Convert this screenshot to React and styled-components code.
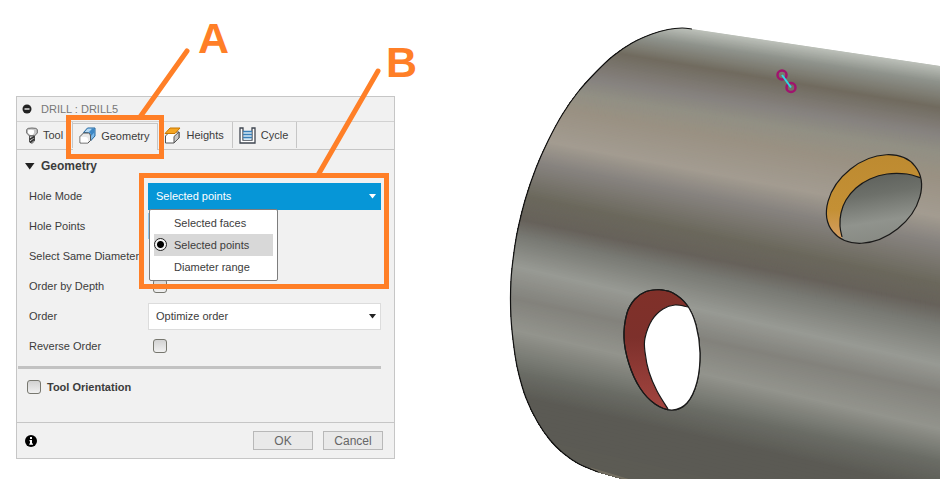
import React from "react";
import styled, { createGlobalStyle } from "styled-components";

const GlobalStyle = createGlobalStyle`
  * {
    box-sizing: border-box;
  }

  body {
    margin: 0;
    background: #ffffff;
    color: #3c3c3c;
    font-family: "Liberation Sans", Arial, sans-serif;
    font-size: 11px;
  }

  button, input, select {
    font: inherit;
    color: inherit;
  }
`;

const orange = "#ff7f27";

const Page = styled.main`
  display: grid;
  grid-template-columns: minmax(0, 25fr) minmax(0, 22fr);
  align-items: start;
`;

const Side = styled.div`
  padding: 96px 105px 20px 16px;
`;

const Panel = styled.form`
  background: #f1f1f1;
  border: 1px solid #c6c6c6;
`;

const Header = styled.header`
  display: flex;
  align-items: center;
  gap: 9px;
  height: 25px;
  padding-left: 5px;
  border-bottom: 1px solid #d2d2d2;
  color: #777777;
`;

const Collapse = styled.button`
  display: flex;
  padding: 0;
  border: 0;
  background: none;
`;

const Title = styled.h1`
  margin: 0;
  font-size: 11px;
  font-weight: normal;
`;

const Tabs = styled.nav`
  display: flex;
  height: 28px;
  border-bottom: 1px solid #c6c6c6;
`;

const Tab = styled.button`
  position: relative;
  display: flex;
  align-items: center;
  gap: 5px;
  height: ${(props) => (props.$active ? 27 : 26)}px;
  margin-top: ${(props) => (props.$active ? 1 : 0)}px;
  padding: 0 8px 0 6px;
  padding-bottom: ${(props) => (props.$active ? 3 : 0)}px;
  border: 0 solid #c6c6c6;
  border-right-width: 1px;
  border-top-width: ${(props) => (props.$active ? 1 : 0)}px;
  background: #f1f1f1;
  white-space: nowrap;

  &:first-child {
    padding: 0 9px;
  }
`;

const Body = styled.div`
  padding: 1px 13px 0 12px;
`;

const SectionTitle = styled.h2`
  display: flex;
  align-items: center;
  gap: 6px;
  height: 30px;
  margin: 0 0 0 -12px;
  padding-left: 8px;
  font-size: 12px;
`;

const Row = styled.div`
  position: relative;
  display: grid;
  grid-template-columns: 119px minmax(0, 1fr);
  align-items: center;
  height: 30px;
`;

const Field = styled.div`
  position: relative;
`;

const Select = styled.select`
  display: block;
  width: 100%;
  height: 27px;
  padding: 0 7px;
  appearance: none;
  border: 1px solid ${(props) => (props.$open ? "#0696d7" : "#dcdcdc")};
  border-radius: 0;
  background: ${(props) => (props.$open ? "#0696d7" : "#ffffff")};
  color: ${(props) => (props.$open ? "#ffffff" : "#3c3c3c")};
`;

const Arrow = styled.svg`
  position: absolute;
  right: 5px;
  top: 11px;
  pointer-events: none;
`;

const Picker = styled.button`
  width: 110px;
  height: 26px;
  border: 1px solid #8cc8f0;
  background: #b4dcf5;
`;

const Menu = styled.div`
  position: absolute;
  z-index: 1;
  top: 26px;
  left: 1px;
  width: 129px;
  padding: 2px 4px;
  border: 1px solid #7d7d7d;
  border-radius: 2px;
  background: #ffffff;
`;

const Option = styled.label`
  display: flex;
  align-items: center;
  gap: 7px;
  height: 22px;
  background: ${(props) => (props.$checked ? "#d8d8d8" : "none")};
`;

const Radio = styled.input`
  width: 13px;
  height: 13px;
  margin: 0;
  appearance: none;
  border-radius: 50%;

  &:checked {
    border: 1px solid #222222;
    background: radial-gradient(circle, #000000 0 3px, #f4f4f4 4px);
  }
`;

const Checkbox = styled.input`
  display: block;
  width: 14px;
  height: 14px;
  margin: 0;
  appearance: none;
  border: 1px solid #77776f;
  border-radius: 3px;
  background: linear-gradient(#d2d2d2, #f0f0f0);
`;

const CheckField = styled.div`
  padding-left: 5px;
`;

const Divider = styled.hr`
  height: 3px;
  margin: 5px 0 0 -11px;
  border: 0;
  background: #c2c2c2;
`;

const Orientation = styled.label`
  display: flex;
  align-items: center;
  gap: 6px;
  height: 53px;
  margin-left: -2px;
  padding-bottom: 18px;
  font-weight: bold;
`;

const Footer = styled.footer`
  display: flex;
  align-items: center;
  gap: 10px;
  height: 36px;
  padding: 0 11px 0 8px;
  border-top: 1px solid #c6c6c6;
`;

const InfoButton = styled(Collapse)`
  margin-right: auto;
`;

const Button = styled.button`
  width: 60px;
  height: 19px;
  padding: 0;
  border: 1px solid #b8b8b8;
  background: #e9e9e9;
  color: #666666;
  font-size: 12px;
`;

const Mark = styled.span`
  position: absolute;
  z-index: 2;
  top: ${(props) => props.$top}px;
  left: ${(props) => props.$left}px;
  right: ${(props) => props.$right}px;
  height: ${(props) => props.$height}px;
  border: 5px solid ${orange};
  pointer-events: none;
`;

const Leader = styled.svg`
  position: absolute;
  right: ${(props) => props.$right}px;
  bottom: calc(100% + 3px);
  overflow: visible;
  fill: ${orange};
  stroke: ${orange};
  font-size: 43px;
  font-weight: bold;
`;

const Model = styled.svg`
  display: block;
  width: 100%;
`;

function Callout({ letter, width, height, line, x, y, right, ...box }) {
  return (
    <Mark $top={box.top} $left={box.left} $right={box.end} $height={box.tall}>
      <Leader $right={right} width={width} height={height}>
        <path d={line} strokeWidth="5" strokeLinecap="round" />
        <text x={x} y={y} stroke="none">
          {letter}
        </text>
      </Leader>
    </Mark>
  );
}

function DrillIcon() {
  return (
    <svg width="12" height="17" viewBox="0 0 12 17" strokeLinejoin="round">
      <path d="M.7 2.500Q1 1 6 1t5.300 1.500V6L8.500 9h-5L.7 6z" fill="#c9c9c9" stroke="#666" />
      <path d="M2 3.200q3-1 6 0V6L6.500 8h-2L2 6z" fill="#fff" />
      <path d="M3.500 9h5v5L6 16.300 3.500 15z" fill="#e4e4e4" stroke="#555" />
      <path d="M3.500 12.500l5-3M4 15.500l4.500-3.500" stroke="#333" strokeWidth="1.600" />
    </svg>
  );
}

function GeometryIcon() {
  return (
    <svg width="17" height="17" viewBox="0 0 17 17" strokeLinejoin="round">
      <path d="M4.500 5.500L8.500 1H16v8l-4.500 5V8.500L9.500 6z" fill="#7db9e8" stroke="#23659c" />
      <path d="M8.700 1.700L5.700 5h4l3-3.300z" fill="#b5d9f3" />
      <path d="M10 5.300q2 .7 2 3.700l3.300-3.500V2H13z" fill="#3d87c4" />
      <path d="M1 9.500L4.500 6h5q2 .5 2 3v4.500L9 16H1z" fill="#e8e8e8" stroke="#555" />
      <path d="M1.500 10H7q2 .3 2 2.500v3H1.500z" fill="#fff" />
    </svg>
  );
}

function HeightsIcon() {
  return (
    <svg width="17" height="17" viewBox="0 0 17 17" strokeLinejoin="round">
      <path d="M1.500 9l4-4H15v6l-5 5H1.500z" fill="#fff" stroke="#555" />
      <path d="M10 9.500L15 5v6l-5 5z" fill="#c8c8c8" stroke="#555" />
      <path d="M1 6.500L6 1h10l-5 5.500z" fill="#f5a623" stroke="#c77700" />
    </svg>
  );
}

function CycleIcon() {
  return (
    <svg width="17" height="17" viewBox="0 0 17 17">
      <path d="M1 1h3v12h9V1h3v15H1z" fill="#fff" stroke="#3f4650" strokeWidth="1.300" />
      <path d="M4.500 4h8v9h-8z" fill="#d4e8f6" />
      <path d="M4 4.500h9M4 7.500h9M4 10.500h9" stroke="#397fb8" strokeWidth="1.400" />
    </svg>
  );
}

function DownArrow({ fill }) {
  return (
    <Arrow width="7" height="5" viewBox="0 0 7 5">
      <path d="M0 0h7L3.500 4.500z" fill={fill} />
    </Arrow>
  );
}

function CheckRow({ id, label }) {
  return (
    <Row>
      <label htmlFor={id}>{label}</label>
      <CheckField>
        <Checkbox type="checkbox" id={id} />
      </CheckField>
    </Row>
  );
}

// [y at the left end, y at the right end, colour]
const bands = [
  [0, 65, [190, 194, 187]],
  [15, 82, [142, 146, 139]],
  [33, 107, [113, 107, 95]],
  [64, 133, [134, 130, 127]],
  [81, 152, [146, 144, 132]],
  [98, 177, [154, 145, 131]],
  [132, 216, [163, 156, 145]],
  [156, 243, [134, 130, 126]],
  [190, 283, [107, 104, 92]],
  [215, 305, [103, 98, 91]],
  [232, 325, [121, 122, 116]],
  [262, 364, [152, 154, 148]],
  [295, 391, [131, 130, 124]],
  [326, 428, [147, 148, 141]],
  [367, 460, [107, 109, 102]],
  [392, 490, [91, 90, 84]],
  [470, 570, [92, 91, 84]],
];

const steps = 20;

function Shading() {
  const strips = [];
  bands.slice(0, -1).forEach((from, i) => {
    const to = bands[i + 1];
    for (let n = 0; n < steps; n++) {
      const mix = (a, b) => a + ((b - a) * n) / steps;
      const color = from[2].map((c, k) => Math.round(mix(c, to[2][k])));
      strips.push(
        <path
          key={`${i}-${n}`}
          d={`M500 ${mix(from[0], to[0])}L940 ${mix(from[1], to[1])}V479H500z`}
          fill={`rgb(${color.join(",")})`}
        />
      );
    }
  });
  return strips;
}

// smooth curve through a list of points
function curve(points) {
  let d = `M${points[0]}`;
  for (let i = 0; i < points.length - 1; i++) {
    const a = points[i - 1] || points[i];
    const b = points[i];
    const c = points[i + 1];
    const e = points[i + 2] || c;
    d += `C${b[0] + (c[0] - a[0]) / 6} ${b[1] + (c[1] - a[1]) / 6} `;
    d += `${c[0] - (e[0] - b[0]) / 6} ${c[1] - (e[1] - b[1]) / 6} ${c}`;
  }
  return d;
}

const rim = curve([
  [692, 29], [682, 28], [668, 29.5], [652, 34], [632, 43], [613, 56],
  [596, 72], [578, 92], [562, 115], [548, 141], [536, 168], [526, 197],
  [519, 224], [515, 245], [511, 280], [511, 318], [515, 355], [519, 375],
  [526, 398], [537, 421], [550, 440], [563, 453], [579, 464], [598, 472],
]);

const redHole = curve([
  [659, 289.5], [673, 293], [687, 305], [696, 325], [700, 353], [697, 382],
  [687, 403], [672, 410], [655, 404], [640, 388], [629, 364], [624, 338],
  [627, 313], [635, 299], [646, 291.5], [659, 289.5],
]);

const redEdge = curve([
  [688, 307], [675, 305], [663, 309], [652, 320], [645, 338], [645, 352],
  [649, 372], [657, 391], [668, 409],
]);

const yellowEdge = curve([
  [921, 178], [907, 174], [887, 174], [870, 179], [856, 188], [846, 200],
  [841, 213], [840, 226], [842, 237],
]);

function Cylinder() {
  return (
    <Model viewBox="500 0 440 479" fill="none" role="img" aria-label="Cylinder with drilled holes">
      <defs>
        <clipPath id="body">
          <path d={`${rim}L622 479H940V66z`} />
        </clipPath>
        <clipPath id="red">
          <path d={redHole} />
        </clipPath>
        <clipPath id="yellow">
          <ellipse cx="874" cy="199" rx="52.6" ry="38.1" transform="rotate(-38.5 874 199)" />
        </clipPath>
        <linearGradient id="redFill" x1="0" y1="0" x2="0" y2="1">
          <stop offset="0" stopColor="#803029" />
          <stop offset=".4" stopColor="#7d302b" />
          <stop offset="1" stopColor="#a34540" />
        </linearGradient>
        <linearGradient id="yellowFill" x1="0" y1="0" x2="0" y2="1">
          <stop offset="0" stopColor="#bd8a30" />
          <stop offset=".6" stopColor="#c49035" />
          <stop offset="1" stopColor="#dca476" />
        </linearGradient>
        <linearGradient id="inside" x1=".4" y1="0" x2=".6" y2="1">
          <stop offset="0" stopColor="#5f625d" />
          <stop offset=".25" stopColor="#6d706a" />
          <stop offset=".6" stopColor="#90938d" />
          <stop offset="1" stopColor="#83857e" />
        </linearGradient>
      </defs>
      <g clipPath="url(#body)">
        <Shading />
        <path d="M590 470l40 12" stroke="#8a816e" strokeWidth="5" opacity=".5" />
      </g>
      <path d={rim} stroke="#111" strokeWidth="1.200" />
      <g stroke="#191919" strokeWidth="1.200">
        <g clipPath="url(#yellow)">
          <path d="M820 150h110v100H820z" fill="url(#yellowFill)" stroke="none" />
          <path d={`${yellowEdge}V250H940z`} fill="url(#inside)" stroke="none" />
          <path d={yellowEdge} />
        </g>
        <ellipse cx="874" cy="199" rx="52.6" ry="38.1" transform="rotate(-38.5 874 199)" />
        <path d={redHole} fill="url(#redFill)" />
        <g clipPath="url(#red)">
          <path d={`${redEdge}V420H720V307z`} fill="#fff" stroke="none" />
          <path d={redEdge} />
        </g>
        <path d={redHole} />
      </g>
      <g stroke="#a0146e" strokeWidth="2.500">
        <circle cx="782" cy="75" r="4.500" />
        <circle cx="791" cy="87.500" r="4.500" />
        <path d="M782 75l9 12.500" stroke="#2fd8e6" strokeWidth="2" />
      </g>
    </Model>
  );
}

const modes = ["Selected faces", "Selected points", "Diameter range"];

function DrillPanel() {
  return (
    <Panel onSubmit={(e) => e.preventDefault()}>
      <Header>
        <Collapse type="button" aria-label="Collapse">
          <svg width="10" height="10" viewBox="0 0 10 10">
            <circle cx="5" cy="5" r="4.500" fill="#222" />
            <path d="M2.500 5h5" stroke="#eee" strokeWidth="1.400" />
          </svg>
        </Collapse>
        <Title>DRILL : DRILL5</Title>
      </Header>
      <Tabs>
        <Tab type="button">
          <DrillIcon />
          Tool
        </Tab>
        <Tab type="button" $active>
          <GeometryIcon />
          Geometry
          <Callout
            letter="A" top={-9} left={-7} end={-7} tall={44}
            right={-28} width={48} height={67} line="M1 67L48 1" x="59" y="3"
          />
        </Tab>
        <Tab type="button">
          <HeightsIcon />
          Heights
        </Tab>
        <Tab type="button">
          <CycleIcon />
          Cycle
        </Tab>
      </Tabs>
      <Body>
        <SectionTitle>
          <svg width="10" height="7" viewBox="0 0 10 7">
            <path d="M0 0h9.500L4.700 6.500z" fill="#222" />
          </svg>
          Geometry
        </SectionTitle>
        <Row>
          <label htmlFor="mode">Hole Mode</label>
          <Field>
            <Select id="mode" $open defaultValue="Selected points">
              {modes.map((mode) => (
                <option key={mode}>{mode}</option>
              ))}
            </Select>
            <DownArrow fill="#ffffff" />
            <Menu>
              {modes.map((mode) => (
                <Option key={mode} $checked={mode === "Selected points"}>
                  <Radio type="radio" name="holeMode" defaultChecked={mode === "Selected points"} />
                  {mode}
                </Option>
              ))}
            </Menu>
            <Callout
              letter="B" top={-10} left={-9} end={-8} tall={116}
              right={6} width={60} height={105} line="M0 105L60 1" x="68" y="7"
            />
          </Field>
        </Row>
        <Row>
          <label htmlFor="points">Hole Points</label>
          <Picker type="button" id="points" />
        </Row>
        <CheckRow id="same" label="Select Same Diameter" />
        <CheckRow id="depth" label="Order by Depth" />
        <Row>
          <label htmlFor="order">Order</label>
          <Field>
            <Select id="order">
              <option>Optimize order</option>
            </Select>
            <DownArrow fill="#222222" />
          </Field>
        </Row>
        <CheckRow id="reverse" label="Reverse Order" />
        <Divider />
        <Orientation>
          <Checkbox type="checkbox" />
          Tool Orientation
        </Orientation>
      </Body>
      <Footer>
        <InfoButton type="button" aria-label="Information">
          <svg width="12" height="12" viewBox="0 0 12 12">
            <circle cx="6" cy="6" r="6" fill="#000" />
            <path d="M5 2h2v2H5zM4.500 5H7v3.500h1v1.300H4.300V8.500H5V6.200h-.5z" fill="#fff" />
          </svg>
        </InfoButton>
        <Button type="submit">OK</Button>
        <Button type="button">Cancel</Button>
      </Footer>
    </Panel>
  );
}

function App() {
  return (
    <Page>
      <GlobalStyle />
      <Side>
        <DrillPanel />
      </Side>
      <Cylinder />
    </Page>
  );
}

export default App;
